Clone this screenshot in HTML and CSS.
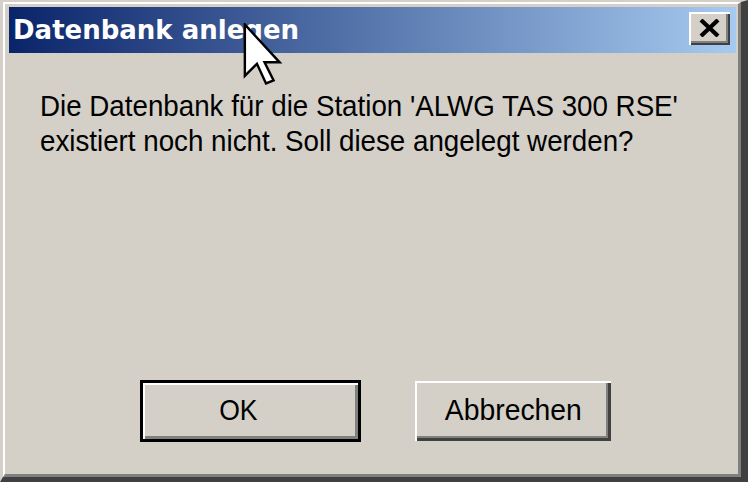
FILE: index.html
```html
<!DOCTYPE html>
<html lang="de">
<head>
<meta charset="utf-8">
<title>Datenbank anlegen</title>
<link rel="stylesheet" href="styles.css">
</head>
<body>
<div class="window">
  <div class="frame">
    <div class="titlebar">
      <span class="title">Datenbank anlegen</span>
      <button class="close" aria-label="Schließen">
        <svg width="21" height="18" viewBox="0 0 21 18">
          <path d="M2 1 L19 17 M19 1 L2 17" stroke="#000" stroke-width="4.2" fill="none"/>
        </svg>
      </button>
    </div>
    <div class="content">
      <p class="message">Die Datenbank für die Station 'ALWG TAS 300 RSE'<br>existiert noch nicht. Soll diese angelegt werden?</p>
      <div class="buttons">
        <button class="btn default"><span class="label">OK</span></button>
        <button class="btn cancel"><span class="label">Abbrechen</span></button>
      </div>
    </div>
  </div>
  <!-- mouse pointer resting on the caption -->
  <svg class="cursor" width="40" height="62" viewBox="-0.5 -0.5 13 20.5">
    <path d="M0 0 L0 17 L4 13 L7 19.5 L9.5 18.5 L6.5 12.5 L11.5 12.5 Z" fill="#fff" stroke="#000" stroke-width="0.8" stroke-linejoin="miter"/>
  </svg>
</div>
</body>
</html>
```
FILE: styles.css
```css
html, body {
  margin: 0;
  padding: 0;
  background: #d4d0c8;
}

.window {
  position: relative;
  width: 748px;
  height: 482px;
  box-sizing: border-box;
  border-style: solid;
  border-width: 2px 7px 5px 3px;
  border-color: #d4d0c8 #404040 #404040 #d4d0c8;
  background: #d4d0c8;
}

.frame {
  height: 100%;
  box-sizing: border-box;
  border-style: solid;
  border-width: 2px 3px 3px 2px;
  border-color: #ffffff #808080 #808080 #ffffff;
  padding: 3px 2px 0 4px;
  display: flex;
  flex-direction: column;
}

.titlebar {
  height: 46px;
  flex: none;
  display: flex;
  align-items: center;
  padding-left: 4px;
  background: linear-gradient(to right, #0a246a 0%, #a6caf0 100%);
}

.title {
  font-family: "DejaVu Sans", "Verdana", sans-serif;
  font-weight: bold;
  font-size: 26px;
  color: #ffffff;
  white-space: nowrap;
}

.close {
  margin-left: auto;
  margin-right: 6px;
  align-self: flex-start;
  margin-top: 5px;
  width: 41px;
  height: 33px;
  padding: 0;
  border: 0;
  background: #d4d0c8;
  box-shadow: inset 2px 2px #ffffff, inset -2px -2px #404040, inset -4px -4px #808080;
  display: flex;
  align-items: center;
  justify-content: center;
}

.close svg {
  display: block;
  margin: 0 1px 2px 0;
}

/* Dialog font: sans, slightly condensed horizontally like the system font */
.content {
  flex: 1;
  display: flex;
  flex-direction: column;
  font-family: "Liberation Sans", Arial, sans-serif;
  font-size: 29.5px;
  color: #000000;
}

.message {
  margin: 35px 0 0 31px;
  line-height: 35px;
  white-space: nowrap;
  transform: scaleX(0.94);
  transform-origin: 0 0;
}

.buttons {
  margin-top: auto;
  margin-bottom: 32px;
  padding-left: 131px;
  display: flex;
  align-items: flex-end;
}

.btn {
  font: inherit;
  color: #000000;
  background: #d4d0c8;
  border: 0;
  padding: 0;
  height: 60px;
  box-shadow: inset 2px 2px #ffffff, inset -3px -3px #404040, inset -5px -5px #808080;
  display: flex;
  align-items: center;
  justify-content: center;
}

.label {
  display: inline-block;
  transform: scaleX(0.9);
  margin-top: -3px;
}

.btn.default {
  width: 221px;
  height: 62px;
  border: 3px solid #000000;
  padding-right: 24px;
  box-shadow: inset 2px 2px #ffffff, inset -3px -3px #808080;
}

.btn.cancel {
  width: 196px;
  margin-left: 54px;
  margin-bottom: 1px;
}

.btn.cancel .label {
  transform: scaleX(0.96);
}

.cursor {
  position: absolute;
  left: 240px;
  top: 21px;
}
```
